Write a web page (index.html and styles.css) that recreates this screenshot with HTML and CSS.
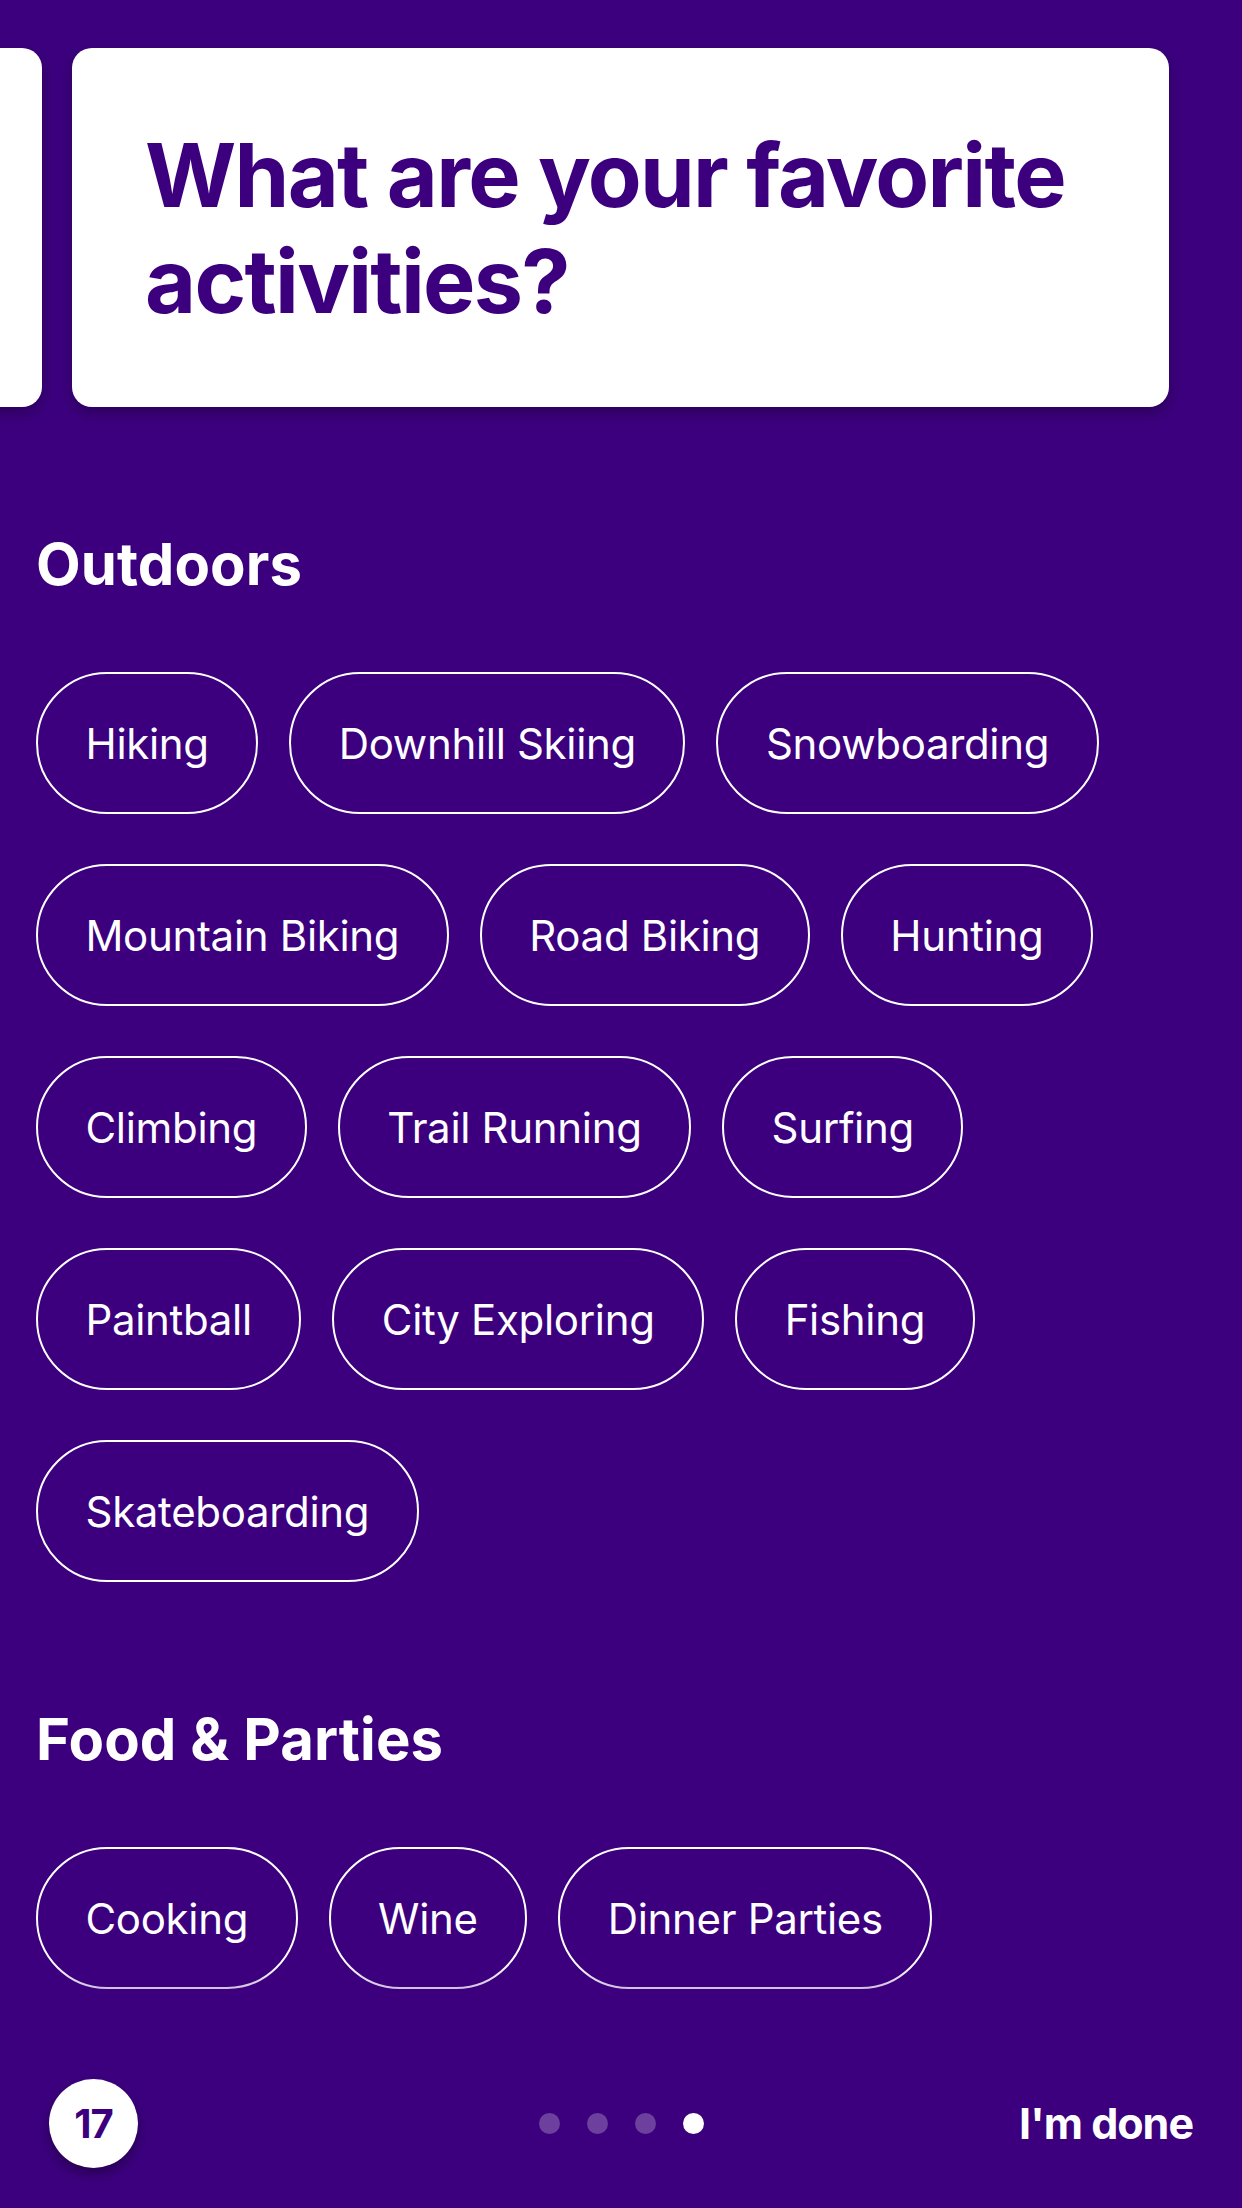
FILE: index.html
```html
<!DOCTYPE html>
<html lang="en">
<head>
<meta charset="utf-8">
<title>Favorite activities</title>
<link rel="stylesheet" href="styles.css">
</head>
<body>
<div class="page">
  <div class="cards">
    <div class="card card-prev"></div>
    <div class="card card-main">
      <h1 class="title">What are your favorite activities?</h1>
    </div>
  </div>

  <section class="section">
    <h2 class="section-title">Outdoors</h2>
    <div class="chips">
      <span class="chip">Hiking</span>
      <span class="chip">Downhill Skiing</span>
      <span class="chip">Snowboarding</span>
      <span class="chip">Mountain Biking</span>
      <span class="chip">Road Biking</span>
      <span class="chip">Hunting</span>
      <span class="chip">Climbing</span>
      <span class="chip">Trail Running</span>
      <span class="chip">Surfing</span>
      <span class="chip">Paintball</span>
      <span class="chip">City Exploring</span>
      <span class="chip">Fishing</span>
      <span class="chip">Skateboarding</span>
    </div>
  </section>

  <section class="section">
    <h2 class="section-title">Food &amp; Parties</h2>
    <div class="chips">
      <span class="chip">Cooking</span>
      <span class="chip">Wine</span>
      <span class="chip">Dinner Parties</span>
    </div>
  </section>

  <footer class="footer">
    <div class="badge">17</div>
    <div class="dots">
      <span class="dot"></span>
      <span class="dot"></span>
      <span class="dot"></span>
      <span class="dot dot-active"></span>
    </div>
    <div class="done">I'm done</div>
  </footer>
</div>
</body>
</html>
```

FILE: styles.css
```css
html, body {
  margin: 0;
  padding: 0;
}
body {
  background: #3c007e;
  font-family: Inter, "Noto Sans", "Liberation Sans", sans-serif;
  color: #ffffff;
}
.page {
  width: 1242px;
  height: 2208px;
  overflow: hidden;
  display: flex;
  flex-direction: column;
  background: #3c007e;
}
.cards {
  display: flex;
  gap: 30px;
  padding-top: 48px;
}
.card {
  flex: 0 0 1097px;
  background: #ffffff;
  border-radius: 20px;
  box-shadow: 0 6px 14px rgba(0, 0, 0, 0.28);
  box-sizing: border-box;
}
.card-prev {
  margin-left: -1055px;
}
.card-main {
  padding: 74px 73px 73px 73px;
}
.title {
  margin: 0;
  font-size: 88px;
  line-height: 106px;
  font-weight: 700;
  color: #3c007e;
  letter-spacing: -1.7px;
}
.section {
  padding: 0 36px;
  margin-top: 123px;
}
.section-title {
  margin: 0;
  font-size: 58px;
  line-height: 68px;
  font-weight: 700;
  color: #ffffff;
  letter-spacing: 0.1px;
}
.chips {
  display: flex;
  flex-wrap: wrap;
  column-gap: 31px;
  row-gap: 50px;
  margin-top: 74px;
}
.chip {
  box-sizing: border-box;
  height: 142px;
  padding: 0 47.5px;
  border: 2px solid #ffffff;
  border-radius: 71px;
  display: inline-flex;
  align-items: center;
  font-size: 42px;
  font-weight: 400;
  color: #ffffff;
  white-space: nowrap;
  letter-spacing: -0.32px;
}
.footer {
  position: relative;
  margin-top: auto;
  height: 170px;
  display: grid;
  grid-template-columns: 1fr auto 1fr;
  align-items: center;
  padding: 0 49px 0 49px;
}
.footer::before {
  content: "";
  position: absolute;
  left: 0;
  right: 0;
  top: -75px;
  height: 75px;
  background: linear-gradient(to bottom, rgba(60, 0, 126, 0), rgba(60, 0, 126, 0.7));
  pointer-events: none;
}
.badge {
  justify-self: start;
  width: 89px;
  height: 89px;
  border-radius: 50%;
  background: #ffffff;
  color: #3c007e;
  font-size: 40px;
  font-weight: 700;
  display: flex;
  align-items: center;
  justify-content: center;
  box-shadow: 0 6px 12px rgba(0, 0, 0, 0.35);
  letter-spacing: -1px;
}
.dots {
  display: flex;
  gap: 27px;
}
.dot {
  width: 21px;
  height: 21px;
  border-radius: 50%;
  background: rgba(255, 255, 255, 0.25);
}
.dot-active {
  background: #ffffff;
}
.done {
  justify-self: end;
  font-size: 43px;
  font-weight: 700;
  color: #ffffff;
  letter-spacing: -1px;
}
```
